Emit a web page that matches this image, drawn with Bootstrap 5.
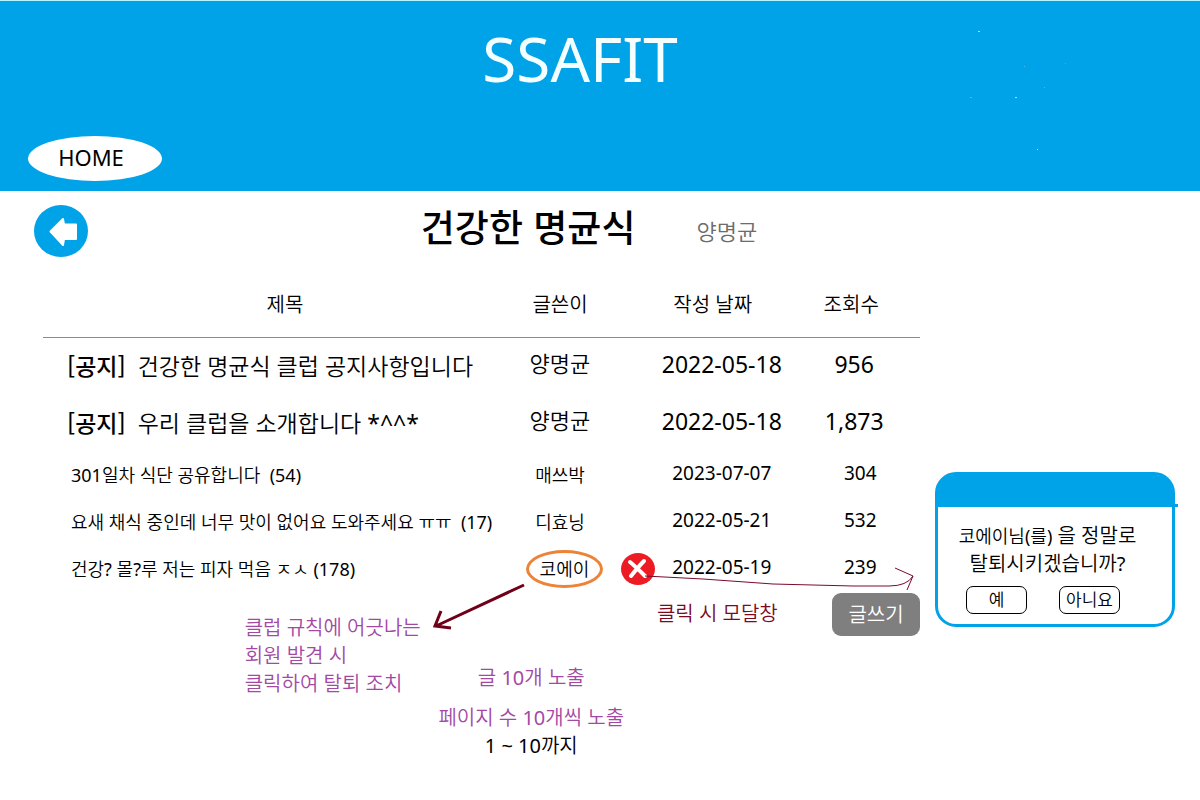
<!DOCTYPE html>
<html lang="ko">
<head>
<meta charset="utf-8">
<meta name="viewport" content="width=device-width, initial-scale=1">
<title>SSAFIT - 건강한 명균식</title>
<link href="https://cdn.jsdelivr.net/npm/bootstrap@5.3.0/dist/css/bootstrap.min.css" rel="stylesheet">
<script src="https://cdn.jsdelivr.net/npm/bootstrap@5.3.0/dist/js/bootstrap.bundle.min.js" defer></script>
<style>
  :root { --sky: #00a2e8; --wine: #7a0a1e; --violet: #a349a4; --thin: "Noto Sans", "Noto Sans CJK KR DemiLight", "Noto Sans CJK KR Light", "Noto Sans CJK KR", sans-serif; }
  body { font-family: var(--thin); color: #000; font-size: 20px; line-height: 28px; }
  .site-head { background: var(--sky); border-top: 1px solid #b4f4ff; height: 191px; }
  .brand { color: #f4ffff; font-size: 62px; line-height: 80px; padding: 17px 40px 0 0; }
  .specks { left: 965px; top: 20px; }
  .home-link { width: 134px; height: 45px; margin-left: 28px; padding: 0 8px 4px 0; border-radius: 50%; background: #fff; color: #000; font-size: 22px; margin-bottom: 10px; }
  .title-bar { padding: 14px 110px 0 34px; }
  .club { font-family: "Noto Sans CJK KR", sans-serif; font-size: 37px; line-height: 42px; font-weight: 500; }
  .owner { font-size: 22px; font-weight: 300; color: #6c6c6c; margin-left: 61px; padding-top: 10px; }
  .board-area { padding: 15px 25px 0 43px; gap: 15px; }
  .board { table-layout: fixed; width: 100%; }
  .board th { font-weight: inherit; height: 65px; border-bottom: 1px solid #6a92ba; padding: 2px 0 0; }
  .board th:first-child { padding-left: 6px; }
  .board th.date { padding-right: 18px; }
  .board th.hits { padding-right: 6px; }
  .board td { padding: 0; height: 47px; font-size: 18px; white-space: nowrap; }
  .board td.num { font-size: 19px; padding-bottom: 4px; }
  .board td.num:last-child { padding-left: 12px; }
  .board .notice td.num:last-child { padding-left: 0; }
  .board .notice td { height: 57px; font-size: 23px; }
  .board .notice .author { font-size: 22px; padding-bottom: 6px; }
  .board a { color: inherit; text-decoration: none; }
  .board td:first-child { padding-left: 28px; }
  .board .notice td:first-child { padding-left: 24px; }
  .board td.ringed { padding-left: 5px; }
  .tag { font-family: "Noto Sans CJK KR", sans-serif; font-weight: 500; margin-right: 12px; }
  .ring { width: 77px; height: 38px; border: 3px solid #ed8336; border-radius: 50%; }
  .to-note { left: -101px; top: 26px; pointer-events: none; }
  .to-modal { left: 22px; top: 6px; pointer-events: none; }
  .notes { display: grid; grid-template-columns: 23% 22% 25% 1fr auto; color: var(--violet); padding-top: 1px; }
  .write { width: 88px; height: 43px; border: 0; border-radius: 9px; background: #7f7f7f; color: #fff; }
  .rule { grid-column: 2; padding-top: 21px; }
  .paging { padding: 71px 32px 0 0; }
  .hint { color: var(--wine); padding-top: 7px; }
  .side { width: 240px; padding-top: 200px; }
  .ask { border: 3px solid var(--sky); border-radius: 21px; height: 155px; }
  .ask-head { background: var(--sky); height: 32px; border-radius: 16px 16px 0 0; }
  .ask-head::after { content: ""; position: absolute; right: -6px; top: 29px; width: 6px; height: 3px; background: var(--sky); }
  .ask-text { padding: 15px 15px 0 0; }
  .ask-name { font-size: 18px; }
  .ask-btn { width: 61px; height: 28px; border: 1px solid #000; border-radius: 7px; background: #fff; font-size: 17px; line-height: 26px; color: #000; padding: 0; }
</style>
</head>
<body>
<header class="site-head d-flex flex-column justify-content-between position-relative">
  <div class="brand text-center">SSAFIT</div>
  <svg class="specks position-absolute" width="110" height="135" fill="#9fe4ff" aria-hidden="true"><rect x="13" y="10" width="2" height="1"/><rect x="50" y="76" width="2" height="1"/><rect x="72" y="128" width="1" height="1"/><rect x="5" y="76" width="2" height="1" opacity=".4"/><rect x="59" y="45" width="1" height="1" opacity=".4"/><rect x="79" y="66" width="1" height="1" opacity=".4"/><rect x="100" y="42" width="1" height="1" opacity=".3"/></svg>
  <a href="#" class="home-link d-flex align-items-center justify-content-center text-decoration-none">HOME</a>
</header>

<div class="title-bar d-flex align-items-start">
  <a href="#" aria-label="뒤로">
    <svg class="d-block" width="54" height="52" viewBox="0 0 54 52"><ellipse cx="27" cy="26" rx="27" ry="26" fill="#00a2e8"/><path d="M16.500 26.500 L29 14 L30 19.500 H42 V34 H30 L29 40 Z" fill="#fff" stroke="#fff" stroke-width="2" stroke-linejoin="round"/></svg>
  </a>
  <div class="flex-grow-1 d-flex justify-content-center align-items-center">
    <h1 class="club m-0">건강한 명균식</h1>
    <span class="owner">양명균</span>
  </div>
</div>

<main class="board-area d-flex align-items-start">
  <section class="flex-grow-1">
    <table class="board">
      <colgroup><col style="width:54.5%"><col style="width:8.9%"><col style="width:6.4%"><col style="width:15.2%"><col></colgroup>
      <thead class="text-center">
        <tr><th scope="col">제목</th><th scope="col">글쓴이</th><th></th><th scope="col" class="date">작성 날짜</th><th scope="col" class="hits">조회수</th></tr>
      </thead>
      <tbody>
        <tr class="notice"><td><span class="tag">[공지]</span><a href="#">건강한 명균식 클럽 공지사항입니다</a></td><td class="author text-center">양명균</td><td></td><td class="num text-center">2022-05-18</td><td class="num text-center">956</td></tr>
        <tr class="notice"><td><span class="tag">[공지]</span><a href="#">우리 클럽을 소개합니다 *^^*</a></td><td class="author text-center">양명균</td><td></td><td class="num text-center">2022-05-18</td><td class="num text-center">1,873</td></tr>
        <tr><td><a href="#">301일차 식단 공유합니다&nbsp; (54)</a></td><td class="text-center">매쓰박</td><td></td><td class="num text-center">2023-07-07</td><td class="num text-center">304</td></tr>
        <tr><td><a href="#">요새 채식 중인데 너무 맛이 없어요 도와주세요 ㅠㅠ&nbsp; (17)</a></td><td class="text-center">디효닝</td><td></td><td class="num text-center">2022-05-21</td><td class="num text-center">532</td></tr>
        <tr><td><a href="#">건강? 몰?루 저는 피자 먹음 ㅈㅅ (178)</a></td>
          <td class="ringed"><div class="ring position-relative d-flex align-items-center justify-content-center">코에이
            <svg class="to-note position-absolute" width="100" height="52" fill="none" stroke="#700018" stroke-width="3" aria-hidden="true"><path d="M96 6 L8 47 M13 32 L7 47 L23 49"/></svg></div></td>
          <td><div class="position-relative d-flex justify-content-end">
            <div class="position-relative">
              <button type="button" class="btn p-0 border-0 d-block" aria-label="탈퇴"><svg class="d-block" width="34" height="32" viewBox="0 0 34 32"><ellipse cx="17" cy="16" rx="17" ry="16" fill="#ed1c24"/><path d="M9 9 Q14 13 24 23 M23 8 Q18 13 10 23" fill="none" stroke="#fff" stroke-width="4" stroke-linecap="round"/></svg></button>
              <svg class="to-modal position-absolute" width="276" height="36" fill="none" stroke="#7a0a2a" aria-hidden="true"><path d="M2 17 L60 20 L130 25 L210 27 L246 27 Q264 27 270 17 M252 9 L270 17 L264 31"/></svg>
            </div></div></td>
          <td class="num text-center">2022-05-19</td><td class="num text-center">239</td></tr>
      </tbody>
    </table>
    <div class="notes align-items-start">
      <p class="rule m-0">클럽 규칙에 어긋나는<br>회원 발견 시<br>클릭하여 탈퇴 조치</p>
      <div class="paging text-center">
        <p class="mb-2 pb-1 text-nowrap">글 10개 노출</p>
        <p class="m-0 text-nowrap">페이지 수 10개씩 노출</p>
        <p class="m-0 text-black">1 ~ 10까지</p>
      </div>
      <p class="hint m-0 text-nowrap">클릭 시 모달창</p>
      <button type="button" class="write">글쓰기</button>
    </div>
  </section>
  <aside class="side flex-shrink-0">
    <div class="ask" role="dialog" aria-label="탈퇴 확인">
      <div class="ask-head position-relative"></div>
      <div class="ask-text text-center text-nowrap"><span class="ask-name">코에이님(를)</span> 을 정말로<br>탈퇴시키겠습니까?</div>
      <div class="d-flex justify-content-center gap-4 pe-4 mt-2">
        <button type="button" class="ask-btn me-2">예</button>
        <button type="button" class="ask-btn">아니요</button>
      </div>
    </div>
  </aside>
</main>
</body>
</html>
